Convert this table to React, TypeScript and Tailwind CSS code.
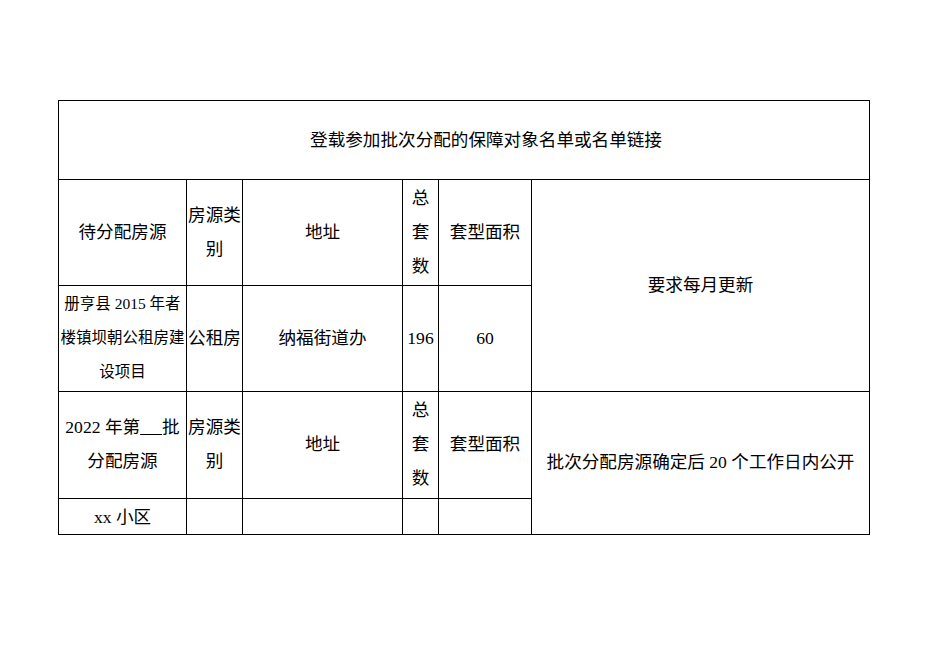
import React from "react";

const font = { fontFamily: '"Liberation Serif", "Noto Sans CJK SC", serif' };

export default function App() {
  const td = "border border-black text-center align-middle p-0 leading-[34px]";
  return (
    <div className="w-[936px] h-[662px] bg-white pt-[100px] pl-[58px] text-black" style={font}>
      <table className="border-collapse table-fixed w-[811px] text-[17.6px]">
        <colgroup>
          <col className="w-[128px]" />
          <col className="w-[56px]" />
          <col className="w-[160px]" />
          <col className="w-[36px]" />
          <col className="w-[93px]" />
          <col className="w-[338px]" />
        </colgroup>
        <tbody>
          <tr className="h-[79px]">
            <td colSpan={6} className={td + " pl-[44px] pb-px"}>登载参加批次分配的保障对象名单或名单链接</td>
          </tr>
          <tr className="h-[106px]">
            <td className={td + " pb-[2px]"}>待分配房源</td>
            <td className={td + " pb-[2px]"}>房源类<br />别</td>
            <td className={td + " pb-[2px]"}>地址</td>
            <td className={td + " pb-[2px]"}>总<br />套<br />数</td>
            <td className={td + " pb-[2px]"}>套型面积</td>
            <td rowSpan={2} className={td + " pb-[2px]"}>要求每月更新</td>
          </tr>
          <tr className="h-[106px]">
            <td className={td + " text-[15.5px] whitespace-nowrap pb-[2px]"}>
              册亨县 2015 年者<br />楼镇坝朝公租房建<br />设项目
            </td>
            <td className={td + " pb-[2px]"}>公租房</td>
            <td className={td + " pb-[2px]"}>纳福街道办</td>
            <td className={td + " pb-[2px]"}>196</td>
            <td className={td + " pb-[2px]"}>60</td>
          </tr>
          <tr className="h-[107px]">
            <td className={td + " whitespace-nowrap pb-[2px]"}>
              2022 年第<span className="underline">&nbsp;&nbsp;&nbsp;&nbsp;&nbsp;</span>批<br />分配房源
            </td>
            <td className={td + " pb-[2px]"}>房源类<br />别</td>
            <td className={td + " pb-[2px]"}>地址</td>
            <td className={td + " pb-[2px]"}>总<br />套<br />数</td>
            <td className={td + " pb-[2px]"}>套型面积</td>
            <td rowSpan={2} className={td + " pb-[2px]"}>批次分配房源确定后 20 个工作日内公开</td>
          </tr>
          <tr className="h-[36px]">
            <td className={td}>xx 小区</td>
            <td className={td}></td>
            <td className={td}></td>
            <td className={td}></td>
            <td className={td}></td>
          </tr>
        </tbody>
      </table>
    </div>
  );
}
